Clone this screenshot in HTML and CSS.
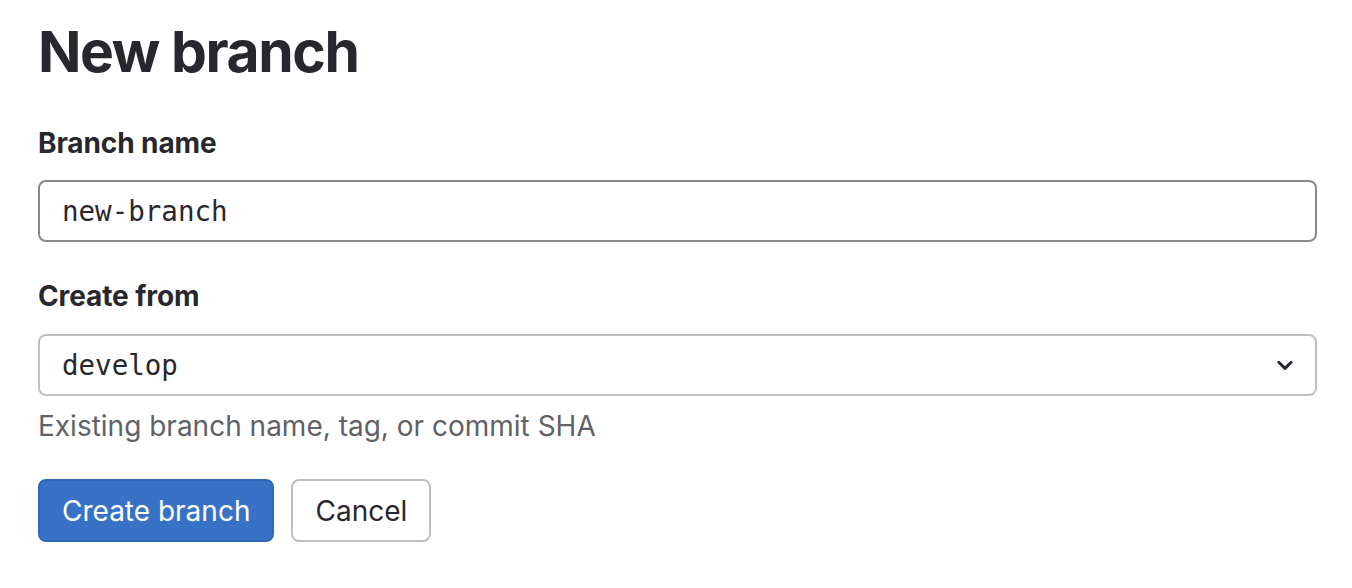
FILE: index.html
```html
<!DOCTYPE html>
<html lang="en">
<head>
<meta charset="utf-8">
<title>New branch</title>
<link rel="stylesheet" href="styles.css">
</head>
<body>
<main class="page">
  <h1 class="page-title">New branch</h1>
  <form class="branch-form">
    <div class="field field-name">
      <label class="field-label" for="branch_name">Branch name</label>
      <input class="text-input" id="branch_name" type="text" value="new-branch">
    </div>
    <div class="field field-ref">
      <label class="field-label" for="ref">Create from</label>
      <div class="select-box" id="ref">
        <span class="select-value">develop</span>
        <svg class="chevron" width="16" height="16" viewBox="0 0 16 16" aria-hidden="true">
          <path d="M2.5 5.5 L8 11 L13.5 5.5" fill="none" stroke="#28272d" stroke-width="2.6" stroke-linecap="round" stroke-linejoin="round"/>
        </svg>
      </div>
      <p class="help-text">Existing branch name, tag, or commit SHA</p>
    </div>
    <div class="actions">
      <button type="button" class="btn btn-confirm">Create branch</button>
      <button type="button" class="btn btn-default">Cancel</button>
    </div>
  </form>
</main>
</body>
</html>
```
FILE: styles.css
```css
* { box-sizing: border-box; }

html, body {
  margin: 0;
  padding: 0;
  background: #ffffff;
}

body {
  font-family: Inter, "Noto Sans", "Liberation Sans", sans-serif;
  color: #28272d;
}

.page {
  padding: 16px 35px 0 38px;
  display: flex;
  flex-direction: column;
}

.page-title {
  margin: 0;
  font-size: 57px;
  line-height: 72px;
  font-weight: 700;
  letter-spacing: -1.4px;
  color: #28272d;
}

.branch-form {
  display: flex;
  flex-direction: column;
}

.field {
  display: flex;
  flex-direction: column;
}

.field-name {
  margin-top: 35px;
}

.field-ref {
  margin-top: 34px;
}

.field-label {
  display: block;
  font-size: 28px;
  line-height: 40px;
  font-weight: 700;
  letter-spacing: -0.1px;
  margin-bottom: 17px;
}

.field-ref .field-label {
  margin-bottom: 18px;
}

.text-input {
  width: 1279px;
  height: 62px;
  border: 2px solid #89888d;
  border-radius: 8px;
  padding: 0 22px;
  font-family: "DejaVu Sans Mono", "Liberation Mono", monospace;
  font-size: 27.5px;
  color: #28272d;
  background: #fff;
  outline: none;
}

.select-box {
  width: 1279px;
  height: 62px;
  border: 2px solid #bfbfc3;
  border-radius: 8px;
  padding: 0 21px 0 22px;
  display: flex;
  align-items: center;
  justify-content: space-between;
}

.select-value {
  font-family: "DejaVu Sans Mono", "Liberation Mono", monospace;
  font-size: 27.5px;
  color: #28272d;
}

.chevron {
  width: 18px;
  height: 18px;
}

.help-text {
  margin: 12px 0 0;
  font-size: 28px;
  line-height: 36px;
  color: #626168;
}

.actions {
  margin-top: 35px;
  display: flex;
  gap: 17px;
}

.btn {
  height: 63px;
  border-radius: 8px;
  padding: 0 22px;
  font-family: Inter, "Noto Sans", "Liberation Sans", sans-serif;
  font-size: 28px;
  font-weight: 400;
  line-height: 1;
  cursor: pointer;
}

.btn-confirm {
  background: #3872c6;
  border: 2px solid #2f66b8;
  color: #ffffff;
}

.btn-default {
  background: #ffffff;
  border: 2px solid #bfbfc3;
  color: #28272d;
}
```
